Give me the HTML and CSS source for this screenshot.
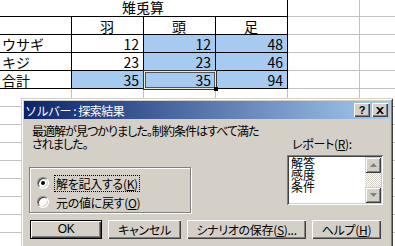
FILE: index.html
```html
<!DOCTYPE html>
<html lang="ja">
<head>
<meta charset="utf-8">
<title>ソルバー</title>
<link rel="stylesheet" href="styles.css">
</head>
<body>
<div class="sheet">
  <div class="row r1">
    <div class="cell b merged c">雉兎算</div>
    <div class="cell"></div><div class="cell"></div>
  </div>
  <div class="row">
    <div class="cell b"></div>
    <div class="cell b c">羽</div>
    <div class="cell b c">頭</div>
    <div class="cell b c">足</div>
    <div class="cell"></div><div class="cell"></div>
  </div>
  <div class="row">
    <div class="cell b">ウサギ</div>
    <div class="cell b n">12</div>
    <div class="cell b n hl">12</div>
    <div class="cell b n hl">48</div>
    <div class="cell"></div><div class="cell"></div>
  </div>
  <div class="row">
    <div class="cell b">キジ</div>
    <div class="cell b n">23</div>
    <div class="cell b n hl">23</div>
    <div class="cell b n hl">46</div>
    <div class="cell"></div><div class="cell"></div>
  </div>
  <div class="row">
    <div class="cell b">合計</div>
    <div class="cell b n hl">35</div>
    <div class="cell b n hl active">35<span class="handle"></span></div>
    <div class="cell b n hl">94</div>
    <div class="cell"></div><div class="cell"></div>
  </div>
  <div class="row"><div class="cell"></div><div class="cell"></div><div class="cell"></div><div class="cell"></div><div class="cell"></div><div class="cell"></div></div>
  <div class="row"><div class="cell"></div><div class="cell"></div><div class="cell"></div><div class="cell"></div><div class="cell"></div><div class="cell"></div></div>
  <div class="row"><div class="cell"></div><div class="cell"></div><div class="cell"></div><div class="cell"></div><div class="cell"></div><div class="cell"></div></div>
  <div class="row"><div class="cell"></div><div class="cell"></div><div class="cell"></div><div class="cell"></div><div class="cell"></div><div class="cell"></div></div>
  <div class="row"><div class="cell"></div><div class="cell"></div><div class="cell"></div><div class="cell"></div><div class="cell"></div><div class="cell"></div></div>
  <div class="row"><div class="cell"></div><div class="cell"></div><div class="cell"></div><div class="cell"></div><div class="cell"></div><div class="cell"></div></div>
  <div class="row"><div class="cell"></div><div class="cell"></div><div class="cell"></div><div class="cell"></div><div class="cell"></div><div class="cell"></div></div>
  <div class="row"><div class="cell"></div><div class="cell"></div><div class="cell"></div><div class="cell"></div><div class="cell"></div><div class="cell"></div></div>
</div>

<div class="dlg">
  <div class="titlebar">
    <span class="ttl">ソルバー : 探索結果</span>
    <div class="tbtns">
      <span class="tbtn q">?</span>
      <span class="tbtn x"><svg width="8" height="7" viewBox="0 0 8 7"><path d="M0 0h2l2 2 2-2h2L5 3.5 8 7H6L4 5 2 7H0l3-3.5z" fill="#000"/></svg></span>
    </div>
  </div>
  <div class="dbody">
    <div class="left">
      <p class="msg">最適解が見つかりました。制約条件はすべて満た<br>されました。</p>
      <div class="group">
        <div class="radio"><span class="rb on"></span><span class="rl focus">解を記入する(<u>K</u>)</span></div>
        <div class="radio"><span class="rb"></span><span class="rl">元の値に戻す(<u>O</u>)</span></div>
      </div>
    </div>
    <div class="right">
      <div class="rlabel">レポート(<u>R</u>):</div>
      <div class="list">
        <div class="items"><div>解答</div><div>感度</div><div>条件</div></div>
        <div class="sb">
          <div class="sbb"><svg width="7" height="4" viewBox="0 0 7 4"><path d="M3.5 0L7 4H0z" fill="#808080"/></svg></div>
          <div class="track"></div>
          <div class="sbb"><svg width="7" height="4" viewBox="0 0 7 4"><path d="M0 0h7L3.5 4z" fill="#808080"/></svg></div>
        </div>
      </div>
    </div>
  </div>
  <div class="btns">
    <div class="btn def">OK</div>
    <div class="btn cancel">キャンセル</div>
    <div class="btn wide">シナリオの保存(<u>S</u>)...</div>
    <div class="btn help">ヘルプ(<u>H</u>)</div>
  </div>
</div>
</body>
</html>
```

FILE: styles.css
```css
* { box-sizing: border-box; margin: 0; padding: 0; }
body {
  width: 395px; height: 246px; overflow: hidden; background: #fff;
  font-family: "Noto Sans CJK JP", "Noto Sans", sans-serif;
  position: relative; color: #000;
}
.sheet { display: flex; flex-direction: column; width: 395px; overflow: hidden; }
.row { display: flex; height: 18px; flex: none; }
.r1 { height: 17px; }
.cell {
  flex: none; width: 72px; height: 100%;
  border-right: 1px solid #c0c0c0; border-bottom: 1px solid #c0c0c0;
  font-size: 14px; line-height: 15px; padding: 2px 3px 0 2px;
  white-space: nowrap; overflow: hidden;
}
.r1 .cell { padding-top: 0; }
.cell.b { border-color: #000; }
.merged { width: 288px; }
.c { text-align: center; }
.n { text-align: right; padding-right: 4px; }
.hl { background: #a6caf0; }
.active { position: relative; overflow: visible; z-index: 1; }
.active::after {
  content: ""; position: absolute; left: -1px; top: -1px; right: -2px; bottom: -2px;
  border: 1px solid #333; box-shadow: inset 0 0 0 1px #eee8d8, inset 0 0 0 2px #555;
}
.handle { position: absolute; right: -3px; bottom: -3px; width: 4px; height: 4px; background: #000; z-index: 2; }

.dlg {
  position: absolute; left: 21px; top: 98px; width: 372px; height: 170px;
  background: #d4d0c8; padding: 3px;
  box-shadow: inset 1px 1px 0 #d4d0c8, inset -1px -1px 0 #404040, inset 2px 2px 0 #fff, inset -2px -2px 0 #808080;
  font-size: 12px; line-height: 13px;
}
.titlebar {
  height: 18px; display: flex; align-items: center; justify-content: space-between;
  background: linear-gradient(to right, #0a246a, #a6caf0);
  padding: 0 2px 0 1px;
}
.ttl { color: #fff; font-size: 12px; letter-spacing: -0.5px; }
.tbtns { display: flex; gap: 2px; }
.tbtn {
  width: 16px; height: 14px; background: #d4d0c8;
  box-shadow: inset 1px 1px 0 #fff, inset -1px -1px 0 #404040, inset -2px -2px 0 #808080;
  display: flex; align-items: center; justify-content: center;
  font-family: "Liberation Sans", sans-serif; font-weight: bold; font-size: 11px;
}
.dbody { display: grid; grid-template-columns: 259px 1fr; padding: 5px 0 0 5px; }
.msg { padding-left: 3px; font-feature-settings: "palt"; white-space: nowrap; letter-spacing: -0.95px; }
.group {
  margin-top: 17px; width: 162px; height: 46px;
  border: 1px solid #808080; box-shadow: inset 1px 1px 0 #fff, 1px 1px 0 #fff;
  padding: 6px 0 0 7px; display: flex; flex-direction: column; gap: 1px;
}
.radio { display: flex; align-items: center; height: 18px; }
.rb {
  width: 12px; height: 12px; border-radius: 50%; flex: none;
  background: #fff; position: relative;
  border: 1px solid; border-color: #808080 #fff #fff #808080;
  box-shadow: inset 1px 1px 0 #404040, inset -1px -1px 0 #d4d0c8;
}
.rb.on::after { content: ""; position: absolute; left: 3px; top: 3px; width: 4px; height: 4px; border-radius: 50%; background: #000; }
.rl { margin-left: 5px; padding: 1px 1px; font-feature-settings: "palt"; border: 1px solid transparent; letter-spacing: -0.3px; }
.rl.focus { border: 1px dotted #000; }
.rlabel { margin-top: 13px; padding-left: 4px; font-feature-settings: "palt"; letter-spacing: -0.3px; }
.list {
  margin-top: 5px; margin-left: -1px; width: 96px; height: 50px; background: #fff;
  display: flex; padding: 2px;
  box-shadow: inset 1px 1px 0 #808080, inset -1px -1px 0 #fff, inset 2px 2px 0 #404040, inset -2px -2px 0 #d4d0c8;
}
.items { flex: 1; padding: 0 0 0 2px; line-height: 12px; }
.sb { width: 16px; display: flex; flex-direction: column; }
.sbb {
  height: 16px; background: #d4d0c8; display: flex; align-items: center; justify-content: center;
  box-shadow: inset 1px 1px 0 #d4d0c8, inset -1px -1px 0 #404040, inset 2px 2px 0 #fff, inset -2px -2px 0 #808080;
}
.track { flex: 1; background: repeating-conic-gradient(#fff 0 25%, #d4d0c8 0 50%) 0 0 / 2px 2px; }
.btns { display: flex; gap: 6px; margin-top: 7px; padding-left: 6px; }
.btn {
  height: 19px; width: 73px; display: flex; align-items: center; justify-content: center;
  background: #d4d0c8; font-feature-settings: "palt"; letter-spacing: -0.3px;
  box-shadow: inset 1px 1px 0 #fff, inset -1px -1px 0 #404040, inset -2px -2px 0 #808080;
}
.btn.def { width: 72px; box-shadow: inset 0 0 0 1px #000, inset 2px 2px 0 #fff, inset -2px -2px 0 #404040, inset -3px -3px 0 #808080; font-family: "Liberation Sans", sans-serif; }
.btn.wide { width: 119px; }
.btn.help { width: 69px; }
u { text-decoration: underline; text-underline-offset: 1px; }
```
